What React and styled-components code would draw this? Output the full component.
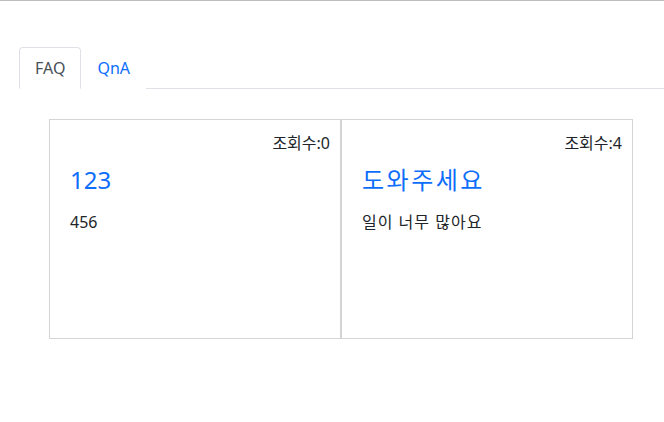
import React, { useState } from "react";
import styled, { createGlobalStyle } from "styled-components";

const GlobalStyle = createGlobalStyle`
  html, body {
    margin: 0;
    padding: 0;
    background: #fff;
  }
  body {
    font-family: "Noto Sans", "Noto Sans CJK KR", sans-serif;
    font-size: 16px;
    line-height: 1.5;
    color: #212529;
  }
`;

const TopRule = styled.div`
  height: 1px;
  background: #bdbdbd;
`;

const Wrap = styled.div`
  padding: 46px 0 0 19px;
`;

const TabBar = styled.ul`
  display: flex;
  margin: 0;
  padding: 0;
  list-style: none;
  border-bottom: 1px solid #dee2e6;
`;

const Tab = styled.li`
  margin-bottom: -1px;
  padding: 8px 15px;
  font-size: 16px;
  line-height: 24px;
  cursor: pointer;
  border: 1px solid ${(p) => (p.$active ? "#dee2e6" : "transparent")};
  border-bottom-color: ${(p) => (p.$active ? "#fff" : "transparent")};
  border-radius: 4px 4px 0 0;
  background: #fff;
  color: ${(p) => (p.$active ? "#495057" : "#0d6efd")};
`;

const CardRow = styled.div`
  display: flex;
  margin: 30px 0 0 30px;
`;

const Card = styled.div`
  box-sizing: border-box;
  width: 292px;
  height: 220px;
  border: 1px solid #d4d4d4;
  padding: 11px 10px 0 20px;
`;

const Views = styled.div`
  text-align: right;
  font-size: 16px;
  line-height: 24px;
`;

// 한글 제목은 맑은고딕보다 좁게 나와서 자간을 조금 벌린다
const Title = styled.h4`
  margin: 10px 0 16px;
  font-size: 24px;
  font-weight: 400;
  line-height: 29px;
  letter-spacing: ${(p) => (p.$ko ? "2.5px" : "0")};
  color: #0d6efd;
`;

const Body = styled.p`
  margin: 0;
  font-size: 16px;
  line-height: 24px;
  letter-spacing: ${(p) => (p.$ko ? "1px" : "0")};
`;

const posts = [
  { id: 1, views: 0, title: "123", body: "456" },
  { id: 2, views: 4, title: "도와주세요", body: "일이 너무 많아요" },
];

const isKo = (s) => /[\uac00-\ud7a3]/.test(s);

export default function App() {
  const [tab, setTab] = useState("FAQ");
  return (
    <>
      <GlobalStyle />
      <TopRule />
      <Wrap>
        <TabBar>
          {["FAQ", "QnA"].map((t) => (
            <Tab key={t} $active={tab === t} onClick={() => setTab(t)}>
              {t}
            </Tab>
          ))}
        </TabBar>
        <CardRow>
          {posts.map((p) => (
            <Card key={p.id}>
              <Views>조회수:{p.views}</Views>
              <Title $ko={isKo(p.title)}>{p.title}</Title>
              <Body $ko={isKo(p.body)}>{p.body}</Body>
            </Card>
          ))}
        </CardRow>
      </Wrap>
    </>
  );
}
